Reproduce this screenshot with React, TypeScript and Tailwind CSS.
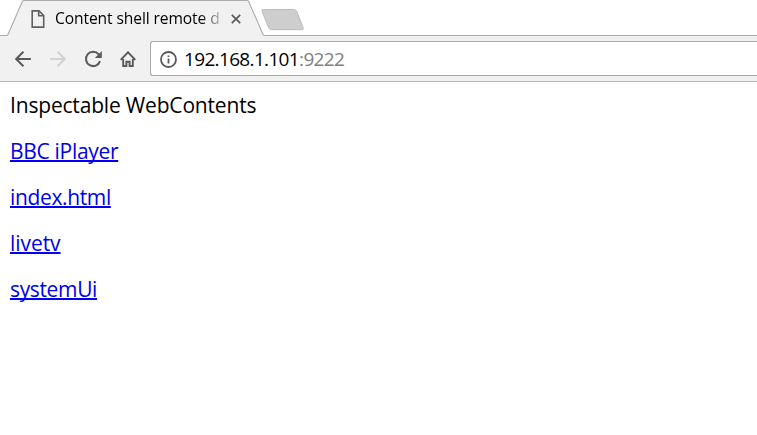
const links = [
  { label: "BBC iPlayer", style: "w-[108px] tracking-[-0.31px]" },
  { label: "index.html", style: "w-[101px] tracking-[-0.36px]" },
  { label: "livetv", style: "w-[51px] tracking-[-0.05px]" },
  { label: "systemUi", style: "w-[87px] tracking-[-0.35px]" },
];

function TabStrip() {
  return (
    <div className="relative h-9 w-full bg-white">
      <svg className="absolute inset-0" width="757" height="36" viewBox="0 0 757 36" fill="none">
        <path d="M0 35.5H6.5Q7.6 35.5 8.1 34.2L22.1 2Q22.8.5 24.3.5H246.7Q248.2.5 248.9 2L262.9 34.2Q263.4 35.5 264.5 35.5H757V36H0Z" fill="#f1f1f1" />
        <path d="M0 35.5H6.5Q7.6 35.5 8.1 34.2L22.1 2Q22.8.5 24.3.5H246.7Q248.2.5 248.9 2L262.9 34.2Q263.4 35.5 264.5 35.5H757" stroke="#acacac" strokeWidth="1.1" />
        <path d="M263.7 9.5H293.7Q295.9 9.5 296.7 11.3L303 27.3Q304 29.7 301.7 29.7H271.8Q269.5 29.7 268.6 27.6L262.1 11.6Q261.2 9.5 263.7 9.5Z" fill="#cecece" stroke="#bcbcbc" />
      </svg>
      <div className="relative flex h-9 items-center pl-[31px]">
        <svg width="14" height="18" viewBox="0 0 14 18" fill="none" stroke="#606060" strokeWidth="1.6" className="mb-[-1px]">
          <path d="M1.2.9H8L12.7 5.5V17.1H1.2Z" />
          <path d="M7.7.8V5.8H12.7" />
        </svg>
        <div className="ml-[10px] h-6 w-[168px] overflow-hidden whitespace-nowrap bg-linear-to-r from-black from-86% to-transparent to-102% bg-clip-text text-[15.6px] leading-6 tracking-[-0.1px] text-transparent">
          Content shell remote d
        </div>
        <svg width="10" height="10" viewBox="0 0 10 10" fill="none" stroke="#5a5a5a" strokeWidth="1.7" className="ml-2 mt-[2px]">
          <path d="M.8.8 9.2 9.2M9.2.8.8 9.2" />
        </svg>
      </div>
    </div>
  );
}

function Toolbar() {
  return (
    <div className="flex h-[46px] items-start border-b border-[#b6b6b6] bg-[#f1f1f1] pl-[15px] pt-[5px]">
      <div className="flex h-[35px] items-center">
        <svg width="16" height="16" viewBox="0 0 16 16" fill="none" stroke="#5a5a5a" strokeWidth="2">
          <path d="M8.4.8 1.2 8 8.4 15.2M1.2 8H15.9" />
        </svg>
        <svg width="16" height="16" viewBox="0 0 16 16" fill="none" stroke="#d2d2d2" strokeWidth="2" className="ml-[19px]">
          <path d="M7.6.8 14.8 8 7.6 15.2M14.8 8H.1" />
        </svg>
        <svg width="18" height="18" viewBox="0 0 18 18" fill="none" className="ml-[18px]">
          <path d="M14.7 4.3A7.2 7.2 0 1 0 16 11.1" stroke="#5a5a5a" strokeWidth="2" />
          <path d="M17.8 1V8H10.8Z" fill="#5a5a5a" />
        </svg>
        <svg width="16" height="16" viewBox="0 0 16 16" fill="none" stroke="#5a5a5a" strokeWidth="1.9" className="ml-[18px]">
          <path d="M.7 8.9 8 1.3 15.3 8.9M3.2 8V15H6.4V10.7H9.6V15H12.8V8" />
        </svg>
      </div>
      <div className="ml-[14px] flex h-[35px] flex-1 items-center rounded-l-[3px] border border-r-0 border-[#a9a9a9] bg-white pl-[9px]">
        <svg width="17" height="17" viewBox="0 0 17 17" fill="none" className="mt-px">
          <circle cx="8.5" cy="8.5" r="7.5" stroke="#5a5a5a" strokeWidth="1.8" />
          <path d="M8.5 7.5V12.5M8.5 4.4V6.1" stroke="#5a5a5a" strokeWidth="1.8" />
        </svg>
        <span className="ml-[7px] whitespace-nowrap text-[19px] leading-6 tracking-[-0.66px] text-black">
          192.168.1.101<span className="text-[#808080]">:9222</span>
        </span>
      </div>
    </div>
  );
}

export default function App() {
  return (
    <div className="h-[435px] w-full overflow-hidden bg-white font-['Open_Sans','Noto_Sans',sans-serif]">
      <TabStrip />
      <Toolbar />
      <main className="flex flex-col items-start gap-[18px] px-[10px] pt-[9px] text-[21px] leading-7">
        <div className="whitespace-nowrap tracking-[-0.18px] text-black">Inspectable WebContents</div>
        {links.map(({ label, style }) => (
          <a
            key={label}
            href="#"
            className={`${style} whitespace-nowrap text-[#0000ee] underline decoration-2 underline-offset-[1px] [text-decoration-skip-ink:none]`}
          >
            {label}
          </a>
        ))}
      </main>
    </div>
  );
}
